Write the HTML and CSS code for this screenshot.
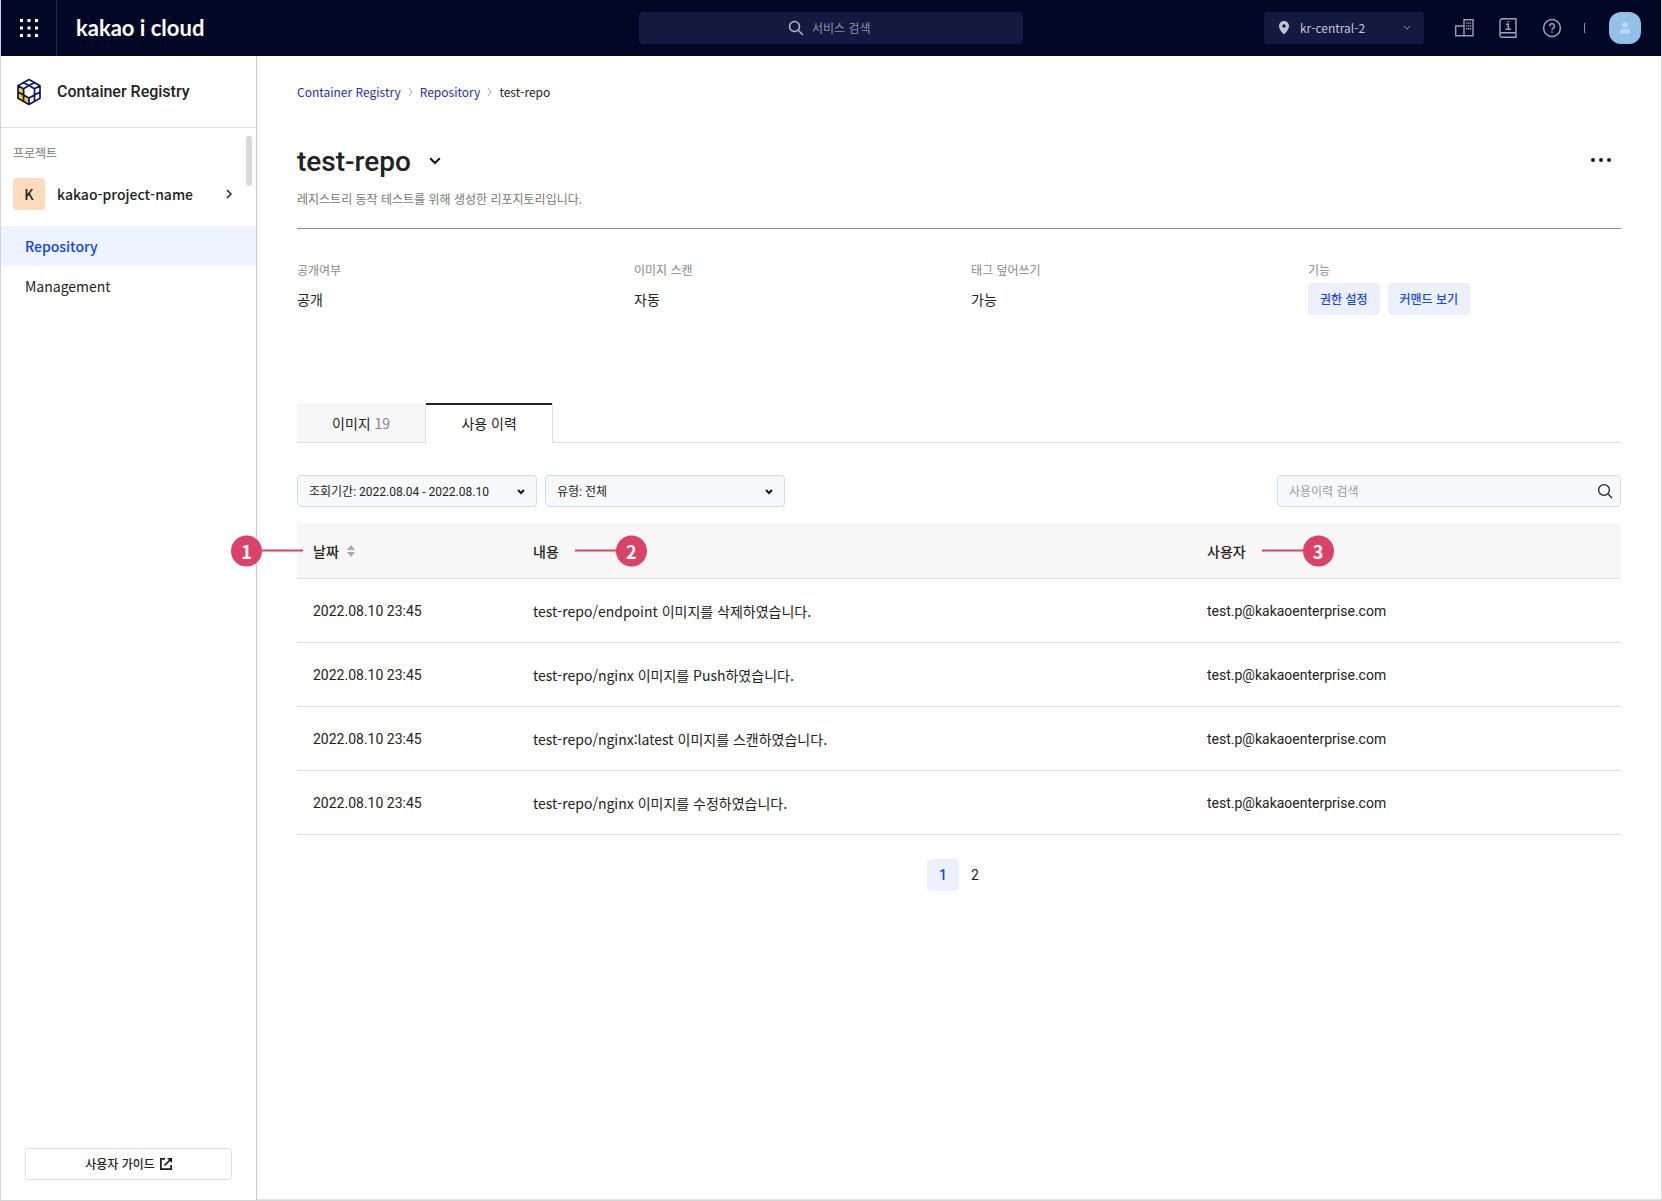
FILE: index.html
```html
<!DOCTYPE html>
<html lang="ko">
<head>
<meta charset="utf-8">
<meta name="viewport" content="width=device-width, initial-scale=1">
<title>Container Registry - test-repo</title>
<link rel="stylesheet" href="styles.css">
</head>
<body>
<header class="topbar">
  <div class="brand">
    <button class="apps" type="button" aria-label="서비스 메뉴">
      <svg width="18" height="18" viewBox="0 0 18 18" fill="#fff"><path d="M0 0h3v3H0zM7.500 0h3v3h-3zM15 0h3v3h-3zM0 7.500h3v3H0zM7.500 7.500h3v3h-3zM15 7.500h3v3h-3zM0 15h3v3H0zM7.500 15h3v3h-3zM15 15h3v3h-3z"/></svg>
    </button>
    <a class="logo" href="#">kakao i cloud</a>
  </div>
  <label class="service-search">
    <svg width="16" height="16" viewBox="0 0 16 16" fill="none" stroke="#b4b7c6" stroke-width="1.500"><circle cx="6.500" cy="6.500" r="5"/><path d="M10.200 10.200 15 15"/></svg>
    <input type="text" placeholder="서비스 검색" aria-label="서비스 검색">
  </label>
  <div class="tools">
    <div class="region">
      <svg class="pin" width="12" height="14" viewBox="0 0 12 14" fill="#c3c5d1"><path fill-rule="evenodd" d="M6 0a5 5 0 0 0-5 5c0 3.500 3.500 7 5 8.500C7.500 12 11 8.500 11 5a5 5 0 0 0-5-5zm0 3.200a1.800 1.800 0 1 1 0 3.600 1.800 1.800 0 0 1 0-3.600z"/></svg>
      <select aria-label="리전"><option>kr-central-2</option></select>
      <svg class="caret" width="8" height="6" viewBox="0 0 8 6" fill="none" stroke="#9093a6"><path d="M1 1l3 3 3-3"/></svg>
    </div>
    <button class="tool" type="button" aria-label="조직">
      <svg width="24" height="24" viewBox="0 0 24 24" fill="none" stroke="#9a9dad" stroke-width="1.400"><path d="M3.700 10H12v9.800H3.700zM12 3.700h9v16.100h-9z"/><path stroke-dasharray="1.300 1.500" d="M14.700 6.500V15M16.700 6.500V15M18.600 6.500V15"/></svg>
    </button>
    <button class="tool" type="button" aria-label="문서">
      <svg width="24" height="24" viewBox="0 0 24 24" fill="none" stroke="#a3a5b4" stroke-width="1.400"><path d="M20 16.800V2.700H6.500a2.500 2.500 0 0 0-2.500 2.500v14.300a1.700 1.700 0 0 0 1.700 1.700H20v-4.400H4"/><path d="M10 8.200h2.300v4.800M9.500 13.300h5.500M12.200 5v1.500"/></svg>
    </button>
    <button class="tool" type="button" aria-label="도움말">
      <svg width="24" height="24" viewBox="0 0 24 24" fill="none" stroke="#a3a5b4" stroke-width="1.500"><circle cx="12" cy="12" r="8.400"/><path d="M9.600 10.200a2.400 2.400 0 1 1 3.400 2.200q-1 .5-1 1.600M12 15.200v1.500"/></svg>
    </button>
    <span class="divider"></span>
    <button class="avatar" type="button" aria-label="내 계정">
      <svg width="10" height="12" viewBox="0 0 10 12" fill="#bcd8f0"><circle cx="5" cy="3" r="2.800"/><path d="M0 11.500V10a3 3 0 0 1 3-3h4a3 3 0 0 1 3 3v1.500z"/></svg>
    </button>
  </div>
</header>

<div class="shell">
  <aside class="sidebar">
    <div class="service">
      <svg width="26" height="28" viewBox="0 0 26 28" fill="none"><path fill="#ffd500" d="M2 7.700 13 14v12.500L2 20.300z"/><path fill="#fff" d="M9 11.500l4 2.500 6-3v7l-6 2-4-2z"/><path stroke="#0a1566" stroke-width="1.700" stroke-linejoin="round" d="M13 1.500l11 6.200v12.600L13 26.500 2 20.300V7.700zM7.500 4.600l5.500 3 5.500-3M2 7.700l5.500 3M24 7.700l-5.500 3M7.500 10.700 13 7.600l5.500 3.100M7.500 10.700v12.600M18.500 10.700v12.600M2 14l5.500 3 5.500 3 5.500-3L24 14M13 20v6.500"/></svg>
      <h2>Container Registry</h2>
    </div>
    <div class="project">
      <p>프로젝트</p>
      <a class="project-link" href="#">
        <span class="badge">K</span>
        <span class="project-name">kakao-project-name</span>
        <svg width="6" height="10" viewBox="0 0 6 10" fill="none" stroke="#222" stroke-width="1.500"><path d="M1 1l4 4-4 4"/></svg>
      </a>
      <span class="thumb"></span>
    </div>
    <nav class="menu">
      <a class="active" href="#">Repository</a>
      <a href="#">Management</a>
    </nav>
    <a class="guide" href="#">사용자 가이드
      <svg width="12" height="12" viewBox="0 0 12 12" fill="none" stroke="#1a1a1a" stroke-width="1.700"><path d="M5 .9H.9v10.200h10.200V7M4.500 7.500 10.500 1.500"/><path fill="#1a1a1a" stroke="none" d="M7 0h5v5z"/></svg>
    </a>
  </aside>

  <main class="content">
    <nav class="crumbs">
      <a href="#">Container Registry</a>
      <svg width="5" height="8" viewBox="0 0 5 8" fill="none" stroke="#a8a8a8"><path d="M1 0l3 4-3 4"/></svg>
      <a href="#">Repository</a>
      <svg width="5" height="8" viewBox="0 0 5 8" fill="none" stroke="#a8a8a8"><path d="M1 0l3 4-3 4"/></svg>
      <span>test-repo</span>
    </nav>
    <div class="heading">
      <h1>test-repo</h1>
      <button type="button" aria-label="리포지토리 선택"><svg width="12" height="8" viewBox="0 0 12 8" fill="none" stroke="#111" stroke-width="2"><path d="M1.200 1.200 6 6l4.800-4.800"/></svg></button>
      <button class="more" type="button" aria-label="더보기"><svg width="20" height="4" viewBox="0 0 20 4" fill="#1a1a1a"><circle cx="2" cy="2" r="2"/><circle cx="10" cy="2" r="2"/><circle cx="18" cy="2" r="2"/></svg></button>
    </div>
    <p class="description">레지스트리 동작 테스트를 위해 생성한 리포지토리입니다.</p>

    <dl class="facts">
      <div><dt>공개여부</dt><dd>공개</dd></div>
      <div><dt>이미지 스캔</dt><dd>자동</dd></div>
      <div><dt>태그 덮어쓰기</dt><dd>가능</dd></div>
      <div><dt>기능</dt><dd><button type="button">권한 설정</button><button type="button">커맨드 보기</button></dd></div>
    </dl>

    <div class="tabs" role="tablist">
      <button type="button" role="tab">이미지 <span>19</span></button>
      <button class="current" type="button" role="tab" aria-selected="true">사용 이력</button>
    </div>

    <div class="filters">
      <div class="picker">
        <select aria-label="조회기간"><option>조회기간: 2022.08.04 - 2022.08.10</option></select>
        <svg class="caret" width="8" height="6" viewBox="0 0 8 6" fill="none" stroke="#111" stroke-width="2"><path d="M1 1l3 3 3-3"/></svg>
      </div>
      <div class="picker">
        <select aria-label="유형"><option>유형: 전체</option></select>
        <svg class="caret" width="8" height="6" viewBox="0 0 8 6" fill="none" stroke="#111" stroke-width="2"><path d="M1 1l3 3 3-3"/></svg>
      </div>
      <label class="history-search">
        <input type="text" placeholder="사용이력 검색" aria-label="사용이력 검색">
        <svg width="16" height="16" viewBox="0 0 16 16" fill="none" stroke="#222" stroke-width="1.300"><circle cx="7" cy="7" r="5.400"/><path d="M11 11l4 4"/></svg>
      </label>
    </div>

    <table class="history">
      <thead>
        <tr>
          <th class="col-date"><div class="head"><span class="marker marker-before"><b>1</b><i></i></span>날짜
            <svg width="8" height="12" viewBox="0 0 8 12" fill="#a9a9a9"><path d="M4 0l4 5H0zM4 12l4-5H0z"/></svg></div></th>
          <th class="col-text"><div class="head">내용<span class="marker marker-after"><i></i><b>2</b></span></div></th>
          <th class="col-user"><div class="head">사용자<span class="marker marker-after"><i></i><b>3</b></span></div></th>
        </tr>
      </thead>
      <tbody>
        <tr><td>2022.08.10 23:45</td><td class="message">test-repo/endpoint 이미지를 삭제하였습니다.</td><td>test.p@kakaoenterprise.com</td></tr>
        <tr><td>2022.08.10 23:45</td><td class="message">test-repo/nginx 이미지를 Push하였습니다.</td><td>test.p@kakaoenterprise.com</td></tr>
        <tr><td>2022.08.10 23:45</td><td class="message">test-repo/nginx:latest 이미지를 스캔하였습니다.</td><td>test.p@kakaoenterprise.com</td></tr>
        <tr><td>2022.08.10 23:45</td><td class="message">test-repo/nginx 이미지를 수정하였습니다.</td><td>test.p@kakaoenterprise.com</td></tr>
      </tbody>
    </table>

    <nav class="pages" aria-label="페이지">
      <button class="current" type="button">1</button>
      <button type="button">2</button>
    </nav>
  </main>
</div>
</body>
</html>
```
FILE: styles.css
```css
* {
  box-sizing: border-box;
}

body {
  --sans: "Noto Sans CJK KR", "Noto Sans", sans-serif;
  --latin: Roboto, "Noto Sans CJK KR", sans-serif;
  display: flex;
  flex-direction: column;
  min-height: 100vh;
  margin: 0;
  border: solid #d4d4d4;
  border-width: 0 1px 1px;
  background: #fff;
  color: #222;
  font: 14px/20px var(--sans);
}

h1, h2, p, dl, dd {
  margin: 0;
}

a {
  color: inherit;
  text-decoration: none;
}

svg {
  display: block;
  flex: none;
}

button, input, select {
  margin: 0;
  padding: 0;
  border: 0;
  background: none;
  color: inherit;
  font: inherit;
}

select {
  appearance: none;
  width: 100%;
  height: 100%;
}

input {
  outline: 0;
}

/* Top bar */

.topbar {
  display: grid;
  grid-template-columns: 1fr 384px 1fr;
  align-items: center;
  height: 56px;
  background: #000826;
  color: #c3c5d1;
}

.brand {
  display: flex;
  align-items: center;
  gap: 19px;
}

.apps {
  display: flex;
  align-items: center;
  justify-content: center;
  width: 56px;
  height: 56px;
  border-right: 1px solid #262c46;
}

.logo {
  color: #fff;
  font: 700 22px/28px Lato, sans-serif;
}

.service-search {
  display: flex;
  align-items: center;
  justify-content: center;
  gap: 8px;
  height: 32px;
  border-radius: 4px;
  background: #14193f;
}

.service-search input {
  width: 62px;
  font-size: 12px;
}

.service-search input::placeholder {
  color: #8f92a6;
}

.tools {
  display: flex;
  align-items: center;
  justify-content: flex-end;
  gap: 20px;
  padding-right: 20px;
}

.region {
  position: relative;
  width: 160px;
  height: 32px;
  margin-right: 8px;
  border-radius: 4px;
  background: #14193f;
  font-size: 12px;
}

.region select {
  padding-left: 36px;
}

.pin {
  position: absolute;
  top: 9px;
  left: 14px;
}

.caret {
  position: absolute;
  top: 13px;
  right: 13px;
  pointer-events: none;
}

.divider {
  width: 1px;
  height: 10px;
  background: #8f92a6;
}

.avatar {
  display: flex;
  align-items: center;
  justify-content: center;
  width: 32px;
  height: 32px;
  margin-left: 4px;
  border-radius: 12px;
  background: #94c0e8;
}

/* Sidebar */

.shell {
  display: flex;
  flex: 1;
}

.sidebar {
  display: flex;
  flex: none;
  flex-direction: column;
  width: 256px;
  border-right: 1px solid #c9c9c9;
}

.service {
  display: flex;
  align-items: center;
  gap: 15px;
  height: 72px;
  padding-left: 15px;
  border-bottom: 1px solid #dedede;
}

.service h2 {
  font: 500 16px/24px var(--latin);
}

.project {
  position: relative;
  padding: 16px 24px 16px 12px;
}

.project p {
  color: #777;
  font-size: 12px;
  line-height: 18px;
}

.project-link {
  display: flex;
  align-items: center;
  gap: 12px;
  margin-top: 16px;
  font-weight: 500;
}

.project-name {
  flex: 1;
}

.badge {
  width: 32px;
  border-radius: 4px;
  background: #ffdabb;
  line-height: 32px;
  text-align: center;
}

.thumb {
  position: absolute;
  top: 8px;
  right: 4px;
  width: 6px;
  height: 50px;
  border-radius: 3px;
  background: #d9d9d9;
}

.menu a {
  display: block;
  padding: 10px 24px;
}

.menu .active {
  background: #eef3ff;
  color: #1243e6;
  font-weight: 500;
}

.guide {
  display: flex;
  align-items: center;
  justify-content: center;
  gap: 5px;
  height: 32px;
  margin: auto 24px 20px;
  border: 1px solid #dedede;
  border-radius: 4px;
  font-size: 12px;
  font-weight: 500;
}

/* Content */

.content {
  flex: 1;
  min-width: 0;
  padding: 26px 40px 40px;
  border-bottom: 1px solid #e4e4e4;
}

.crumbs {
  display: flex;
  align-items: center;
  gap: 7px;
  font-size: 12px;
}

.crumbs a {
  color: #2a30a0;
}

.heading {
  display: flex;
  align-items: center;
  gap: 18px;
  margin-top: 40px;
}

.heading h1 {
  font: 500 28px/40px var(--latin);
}

.heading button {
  padding-bottom: 2px;
}

.heading .more {
  margin-left: auto;
  padding: 0 10px 4px;
}

.description {
  padding: 8px 0 20px;
  border-bottom: 1px solid #8f8f8f;
  color: #777;
  font-size: 12px;
  line-height: 18px;
}

.facts {
  display: grid;
  grid-template-columns: repeat(4, 1fr);
  gap: 24px;
  margin-top: 32px;
}

.facts dt {
  color: #888;
  font-size: 12px;
  line-height: 18px;
}

.facts dd {
  display: flex;
  gap: 8px;
  margin-top: 4px;
  line-height: 32px;
}

.facts button {
  padding: 0 12px;
  border-radius: 4px;
  background: #ecf0fd;
  color: #1a48dc;
  font-size: 12px;
  font-weight: 500;
}

.tabs {
  display: flex;
  margin-top: 88px;
  box-shadow: inset 0 -1px #dedede;
}

.tabs button {
  min-width: 128px;
  height: 40px;
  padding: 0 35px;
  border-bottom: 1px solid #dedede;
  border-radius: 4px 0 0;
  background: #f7f7f7;
}

.tabs span {
  color: #888;
}

.tabs .current {
  border: solid #dedede;
  border-width: 0 1px;
  border-radius: 0;
  background: #fff;
  box-shadow: inset 0 2px #222;
}

.filters {
  display: flex;
  gap: 8px;
  margin-top: 32px;
  font: 12px/18px var(--latin);
}

.picker, .history-search {
  position: relative;
  height: 32px;
  border: 1px solid #d5dae4;
  border-radius: 4px;
  background: #f8f9fc;
}

.picker {
  width: 240px;
}

.picker select {
  padding: 2px 0 0 11px;
}

.picker .caret {
  right: 11px;
}

.history-search {
  display: flex;
  align-items: center;
  width: 344px;
  margin-left: auto;
  padding: 0 7px 0 11px;
}

.history-search input {
  flex: 1;
  font-family: var(--sans);
}

.history-search input::placeholder {
  color: #999;
}

/* History table */

.history {
  width: 100%;
  margin-top: 16px;
  border-collapse: separate;
  border-spacing: 0;
  table-layout: fixed;
  font-family: var(--latin);
}

.history th, .history td {
  padding: 0 16px;
  border-bottom: 1px solid #dedede;
  text-align: left;
}

.history th {
  height: 56px;
  background: #f7f7f7;
  font-weight: 500;
  font-family: var(--sans);
}

.history td {
  height: 64px;
}

.history .message {
  font-family: var(--sans);
}

.col-date {
  width: 220px;
}

.col-user {
  width: 430px;
}

.head {
  position: relative;
  display: flex;
  align-items: center;
  gap: 8px;
  width: max-content;
}

.marker {
  position: absolute;
  top: 50%;
  display: flex;
  align-items: center;
  transform: translateY(-50%);
}

.marker-before {
  right: 100%;
  margin-right: 10px;
}

.marker-after {
  left: 100%;
  margin-left: 16px;
}

.marker i {
  width: 41px;
  height: 2px;
  background: #db4269;
}

.marker b {
  width: 31px;
  border-radius: 50%;
  background: #db4269;
  color: #fff;
  font: 700 18px/31px var(--sans);
  text-align: center;
}

.pages {
  display: flex;
  justify-content: center;
  margin-top: 24px;
  font-family: var(--latin);
}

.pages button {
  width: 32px;
  height: 32px;
  border-radius: 4px;
}

.pages .current {
  background: #ecf0fd;
  color: #1a48dc;
  font-weight: 500;
}
```
